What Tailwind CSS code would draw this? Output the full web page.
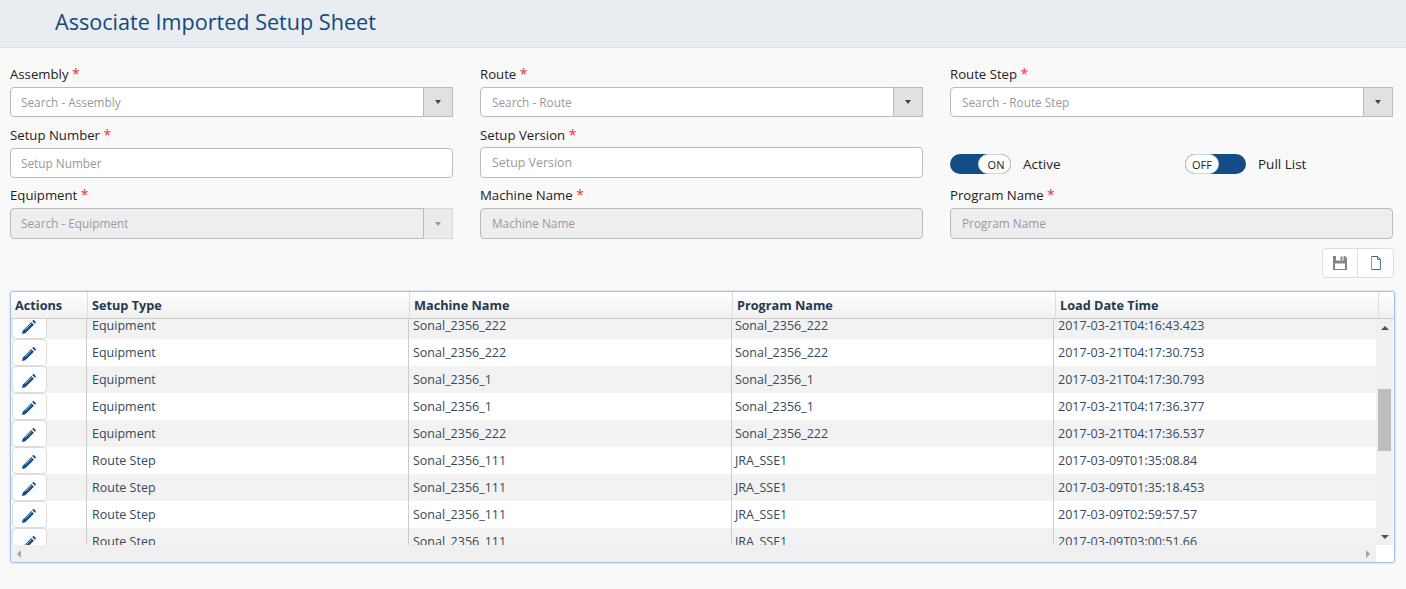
<!DOCTYPE html>
<html lang="en">
<head>
<meta charset="UTF-8">
<title>Associate Imported Setup Sheet</title>
<script src="https://cdn.jsdelivr.net/npm/@tailwindcss/browser@4"></script>
</head>
<body class="bg-[#f9f9f9] h-[589px] overflow-hidden font-['Open_Sans',sans-serif] text-[13.2px] text-[#333]">
  <svg class="hidden">
    <symbol id="pencil" viewBox="0 0 14 14"><path fill="#124e85" d="M0 14l.7-3.300L9.300 2.100l2.600 2.600-8.600 8.600zM10.200 1.100l.6-.7c.5-.4 1-.4 1.400 0l1.400 1.400c.4.400.4.900 0 1.400l-.7.600z"/><path stroke="#fff" stroke-width=".7" fill="none" d="M3.200 9.600l6.200-6.200"/></symbol>
  </svg>

  <header class="h-[48px] bg-[#e9ecf1] border-b border-[#e1e3e6] pl-[55px] flex items-center">
    <h1 class="text-[21.6px] leading-none text-[#124a7c] pb-[3px]">Associate Imported Setup Sheet</h1>
  </header>

  <div class="pl-[10px] pr-[13px] pt-[16px]">
    <div class="grid grid-cols-[443px_443px_443px] gap-x-[27px]">
      <div class="h-[61px]">
        <label class="block h-[23px] leading-[20px] text-[#222]">Assembly <span class="text-red-500 text-[14px]">*</span></label>
        <div class="flex h-[30px]">
          <div class="flex-1 bg-white border border-[#bbb] rounded-l-[4px] pl-[10px] leading-[28px] text-[11.8px] text-[#999]">Search - Assembly</div>
          <div class="w-[29px] bg-[#e0e1e2] border border-l-0 border-[#bbb] flex items-center justify-center"><span class="border-x-[3.5px] border-t-[4px] border-x-transparent border-t-[#444]"></span></div>
        </div>
      </div>
      <div class="h-[61px]">
        <label class="block h-[23px] leading-[20px] text-[#222]">Route <span class="text-red-500 text-[14px]">*</span></label>
        <div class="flex h-[30px]">
          <div class="flex-1 bg-white border border-[#bbb] rounded-l-[4px] pl-[11px] leading-[28px] text-[11.8px] text-[#999]">Search - Route</div>
          <div class="w-[29px] bg-[#e0e1e2] border border-l-0 border-[#bbb] flex items-center justify-center"><span class="border-x-[3.5px] border-t-[4px] border-x-transparent border-t-[#444]"></span></div>
        </div>
      </div>
      <div class="h-[61px]">
        <label class="block h-[23px] leading-[20px] text-[#222]">Route Step <span class="text-red-500 text-[14px]">*</span></label>
        <div class="flex h-[30px]">
          <div class="flex-1 bg-white border border-[#bbb] rounded-l-[4px] pl-[11px] leading-[28px] text-[11.8px] text-[#999]">Search - Route Step</div>
          <div class="w-[29px] bg-[#e0e1e2] border border-l-0 border-[#bbb] flex items-center justify-center"><span class="border-x-[3.5px] border-t-[4px] border-x-transparent border-t-[#444]"></span></div>
        </div>
      </div>

      <div class="h-[60px]">
        <label class="block h-[23px] leading-[20px] text-[#222]">Setup Number <span class="text-red-500 text-[14px]">*</span></label>
        <div class="h-[30px] bg-white border border-[#bbb] rounded-[4px] pl-[10px] leading-[28px] text-[11.8px] text-[#999]">Setup Number</div>
      </div>
      <div class="h-[60px]">
        <label class="block h-[22px] leading-[20px] text-[#222]">Setup Version <span class="text-red-500 text-[14px]">*</span></label>
        <div class="h-[31px] bg-white border border-[#bbb] rounded-[4px] pl-[11px] leading-[29px] text-[12.4px] text-[#999]">Setup Version</div>
      </div>
      <div class="h-[60px] grid grid-cols-[235px_1fr] pt-[29px] items-start">
        <div class="flex items-center">
          <div class="w-[61px] h-[20px] rounded-full bg-[#124e85] flex justify-end">
            <span class="w-[33px] h-[20px] rounded-full bg-white border border-[#cdd7e3] text-[11px] leading-[19px] text-center text-[#222] pl-[3px]">ON</span>
          </div>
          <span class="ml-[12px] text-[#222] text-[13.5px]">Active</span>
        </div>
        <div class="flex items-center">
          <div class="w-[61px] h-[20px] rounded-full bg-[#124e85] flex">
            <span class="w-[34px] h-[20px] rounded-full bg-white border border-[#cdd7e3] text-[11px] leading-[19px] text-center text-[#222]">OFF</span>
          </div>
          <span class="ml-[12px] text-[#222] text-[13.5px]">Pull List</span>
        </div>
      </div>

      <div>
        <label class="block h-[23px] leading-[20px] text-[#222]">Equipment <span class="text-red-500 text-[14px]">*</span></label>
        <div class="flex h-[31px]">
          <div class="flex-1 bg-[#eee] border border-[#bbb] rounded-l-[4px] pl-[10px] leading-[29px] text-[11.8px] text-[#999]">Search - Equipment</div>
          <div class="w-[29px] bg-[#eaebeb] border border-l-0 border-[#d8d8d8] flex items-center justify-center"><span class="border-x-[3.5px] border-t-[4px] border-x-transparent border-t-[#999]"></span></div>
        </div>
      </div>
      <div>
        <label class="block h-[23px] leading-[20px] text-[#222]">Machine Name <span class="text-red-500 text-[14px]">*</span></label>
        <div class="h-[31px] bg-[#eee] border border-[#bbb] rounded-[4px] pl-[11px] leading-[29px] text-[11.8px] text-[#999]">Machine Name</div>
      </div>
      <div>
        <label class="block h-[23px] leading-[20px] text-[#222]">Program Name <span class="text-red-500 text-[14px]">*</span></label>
        <div class="h-[31px] bg-[#eee] border border-[#bbb] rounded-[4px] pl-[11px] leading-[29px] text-[11.8px] text-[#999]">Program Name</div>
      </div>
    </div>

    <div class="flex justify-end mt-[9px] -mr-[1px]">
      <div class="flex h-[30px] bg-white border border-[#ddd] rounded-[4px]">
        <div class="w-[35px] flex items-center justify-center border-r border-[#ddd]">
          <svg width="14" height="14" viewBox="0 0 14 14"><path fill="#858585" d="M0 0h12l2 2v12H0z"/><path fill="#fff" d="M3 0h7.500v4.500H3zM2 7.500h10V13H2z"/><path fill="#858585" d="M7.500 .5h2v3.500h-2z"/></svg>
        </div>
        <div class="w-[35px] flex items-center justify-center">
          <svg width="12" height="14" viewBox="0 0 12 14" fill="none"><path stroke="#555" d="M1.500 .5h6l3 3"/><path stroke="#666" d="M1.500 13.500h9"/><path stroke="#e08a3c" d="M1.500 .5v13"/><path stroke="#4a78b8" d="M7.500 .5v3h3v10"/></svg>
        </div>
      </div>
    </div>

    <div class="mt-[13px] h-[272px] w-[1385px] bg-white border border-[#a0c0f0] rounded-[3px] shadow-[0_0_2px_#a9c6f0] flex flex-col overflow-hidden text-[#34495e]">
      <div class="h-[27px] shrink-0 grid grid-cols-[77px_322px_323px_323px_323px_1fr] bg-gradient-to-b from-white to-[#f0f0f0] border-b border-[#ccc] font-bold text-[12.7px] text-[#23394f] leading-[26px]">
        <div class="pl-[4px] border-r border-[#ddd]">Actions</div>
        <div class="pl-[4px] border-r border-[#ddd]">Setup Type</div>
        <div class="pl-[4px] border-r border-[#ddd]">Machine Name</div>
        <div class="pl-[4px] border-r border-[#ddd]">Program Name</div>
        <div class="pl-[4px] border-r border-[#ddd]">Load Date Time</div>
        <div></div>
      </div>
      <div class="flex flex-1 min-h-0">
        <div class="w-[1365px] overflow-hidden">
          <div class="-mt-[7px] text-[12.5px] leading-[27px]">
            <div class="h-[27px] grid grid-cols-[76px_322px_323px_322px_1fr] bg-[#f2f2f2]">
              <div class="border-r border-[#ccc] pl-[1px]"><div class="w-[35px] h-[27px] bg-white border border-[#ddd] rounded-[4px] flex items-center justify-center pr-[1px] pt-[2px]"><svg class="w-[14px] h-[14px]"><use href="#pencil"/></svg></div></div>
              <div class="pl-[5px] border-r border-[#ccc]">Equipment</div><div class="pl-[4px] border-r border-[#ccc]">Sonal_2356_222</div><div class="pl-[3px] border-r border-[#ccc]">Sonal_2356_222</div><div class="pl-[4px]">2017-03-21T04:16:43.423</div>
            </div>
            <div class="h-[27px] grid grid-cols-[76px_322px_323px_322px_1fr] bg-white">
              <div class="border-r border-[#ccc] pl-[1px]"><div class="w-[35px] h-[27px] bg-white border border-[#ddd] rounded-[4px] flex items-center justify-center pr-[1px] pt-[2px]"><svg class="w-[14px] h-[14px]"><use href="#pencil"/></svg></div></div>
              <div class="pl-[5px] border-r border-[#ccc]">Equipment</div><div class="pl-[4px] border-r border-[#ccc]">Sonal_2356_222</div><div class="pl-[3px] border-r border-[#ccc]">Sonal_2356_222</div><div class="pl-[4px]">2017-03-21T04:17:30.753</div>
            </div>
            <div class="h-[27px] grid grid-cols-[76px_322px_323px_322px_1fr] bg-[#f2f2f2]">
              <div class="border-r border-[#ccc] pl-[1px]"><div class="w-[35px] h-[27px] bg-white border border-[#ddd] rounded-[4px] flex items-center justify-center pr-[1px] pt-[2px]"><svg class="w-[14px] h-[14px]"><use href="#pencil"/></svg></div></div>
              <div class="pl-[5px] border-r border-[#ccc]">Equipment</div><div class="pl-[4px] border-r border-[#ccc]">Sonal_2356_1</div><div class="pl-[3px] border-r border-[#ccc]">Sonal_2356_1</div><div class="pl-[4px]">2017-03-21T04:17:30.793</div>
            </div>
            <div class="h-[27px] grid grid-cols-[76px_322px_323px_322px_1fr] bg-white">
              <div class="border-r border-[#ccc] pl-[1px]"><div class="w-[35px] h-[27px] bg-white border border-[#ddd] rounded-[4px] flex items-center justify-center pr-[1px] pt-[2px]"><svg class="w-[14px] h-[14px]"><use href="#pencil"/></svg></div></div>
              <div class="pl-[5px] border-r border-[#ccc]">Equipment</div><div class="pl-[4px] border-r border-[#ccc]">Sonal_2356_1</div><div class="pl-[3px] border-r border-[#ccc]">Sonal_2356_1</div><div class="pl-[4px]">2017-03-21T04:17:36.377</div>
            </div>
            <div class="h-[27px] grid grid-cols-[76px_322px_323px_322px_1fr] bg-[#f2f2f2]">
              <div class="border-r border-[#ccc] pl-[1px]"><div class="w-[35px] h-[27px] bg-white border border-[#ddd] rounded-[4px] flex items-center justify-center pr-[1px] pt-[2px]"><svg class="w-[14px] h-[14px]"><use href="#pencil"/></svg></div></div>
              <div class="pl-[5px] border-r border-[#ccc]">Equipment</div><div class="pl-[4px] border-r border-[#ccc]">Sonal_2356_222</div><div class="pl-[3px] border-r border-[#ccc]">Sonal_2356_222</div><div class="pl-[4px]">2017-03-21T04:17:36.537</div>
            </div>
            <div class="h-[27px] grid grid-cols-[76px_322px_323px_322px_1fr] bg-white">
              <div class="border-r border-[#ccc] pl-[1px]"><div class="w-[35px] h-[27px] bg-white border border-[#ddd] rounded-[4px] flex items-center justify-center pr-[1px] pt-[2px]"><svg class="w-[14px] h-[14px]"><use href="#pencil"/></svg></div></div>
              <div class="pl-[5px] border-r border-[#ccc]">Route Step</div><div class="pl-[4px] border-r border-[#ccc]">Sonal_2356_111</div><div class="pl-[3px] border-r border-[#ccc]">JRA_SSE1</div><div class="pl-[4px]">2017-03-09T01:35:08.84</div>
            </div>
            <div class="h-[27px] grid grid-cols-[76px_322px_323px_322px_1fr] bg-[#f2f2f2]">
              <div class="border-r border-[#ccc] pl-[1px]"><div class="w-[35px] h-[27px] bg-white border border-[#ddd] rounded-[4px] flex items-center justify-center pr-[1px] pt-[2px]"><svg class="w-[14px] h-[14px]"><use href="#pencil"/></svg></div></div>
              <div class="pl-[5px] border-r border-[#ccc]">Route Step</div><div class="pl-[4px] border-r border-[#ccc]">Sonal_2356_111</div><div class="pl-[3px] border-r border-[#ccc]">JRA_SSE1</div><div class="pl-[4px]">2017-03-09T01:35:18.453</div>
            </div>
            <div class="h-[27px] grid grid-cols-[76px_322px_323px_322px_1fr] bg-white">
              <div class="border-r border-[#ccc] pl-[1px]"><div class="w-[35px] h-[27px] bg-white border border-[#ddd] rounded-[4px] flex items-center justify-center pr-[1px] pt-[2px]"><svg class="w-[14px] h-[14px]"><use href="#pencil"/></svg></div></div>
              <div class="pl-[5px] border-r border-[#ccc]">Route Step</div><div class="pl-[4px] border-r border-[#ccc]">Sonal_2356_111</div><div class="pl-[3px] border-r border-[#ccc]">JRA_SSE1</div><div class="pl-[4px]">2017-03-09T02:59:57.57</div>
            </div>
            <div class="h-[27px] grid grid-cols-[76px_322px_323px_322px_1fr] bg-[#f2f2f2]">
              <div class="border-r border-[#ccc] pl-[1px]"><div class="w-[35px] h-[27px] bg-white border border-[#ddd] rounded-[4px] flex items-center justify-center pr-[1px] pt-[2px]"><svg class="w-[14px] h-[14px]"><use href="#pencil"/></svg></div></div>
              <div class="pl-[5px] border-r border-[#ccc]">Route Step</div><div class="pl-[4px] border-r border-[#ccc]">Sonal_2356_111</div><div class="pl-[3px] border-r border-[#ccc]">JRA_SSE1</div><div class="pl-[4px]">2017-03-09T03:00:51.66</div>
            </div>
          </div>
        </div>
        <div class="w-[17px] bg-[#f0f0f0] flex flex-col items-center pt-[7px]">
          <span class="border-x-[4px] border-b-[4px] border-x-transparent border-b-[#505050]"></span>
          <div class="w-[13px] h-[62px] bg-[#bdbdbd] mt-[59px]"></div>
          <span class="mt-auto mb-[6px] border-x-[4px] border-t-[4px] border-x-transparent border-t-[#505050]"></span>
        </div>
      </div>
      <div class="h-[17px] shrink-0 flex">
        <div class="w-[1365px] bg-[#f0f0f0] flex items-center justify-between px-[6px]">
          <span class="border-y-[4px] border-r-[4px] border-y-transparent border-r-[#a3a3a3]"></span>
          <span class="border-y-[4px] border-l-[4px] border-y-transparent border-l-[#a3a3a3]"></span>
        </div>
        <div class="flex-1 bg-white"></div>
      </div>
    </div>
  </div>
</body>
</html>
